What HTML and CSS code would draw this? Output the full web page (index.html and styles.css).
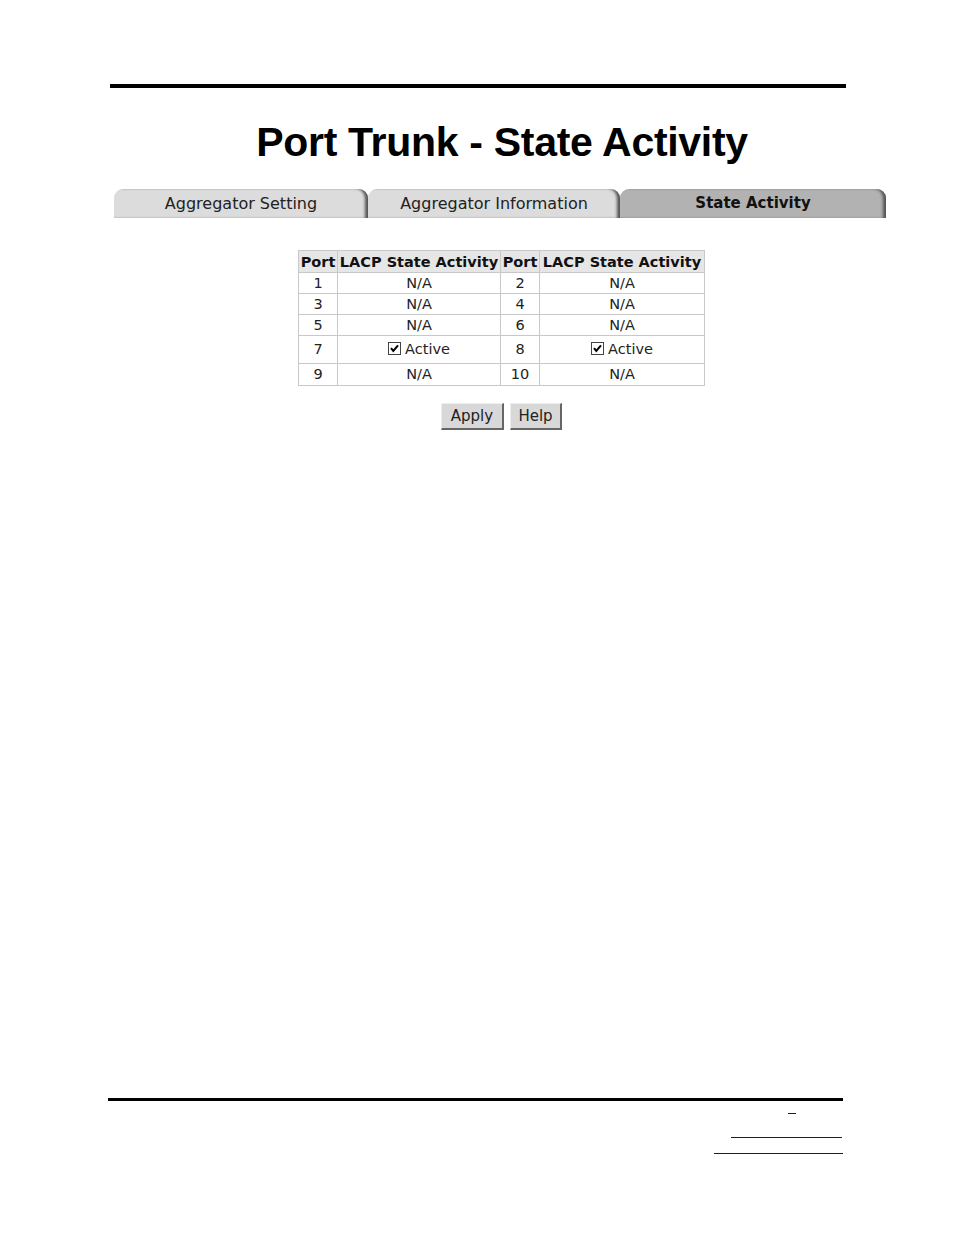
FILE: index.html
```html
<!DOCTYPE html>
<html>
<head>
<meta charset="utf-8">
<link rel="stylesheet" href="styles.css">
</head>
<body>
<div class="page">
  <div class="rule-top"></div>
  <h1 class="title">Port Trunk - State Activity</h1>
  <div class="tabs">
    <div class="tab tab1">Aggregator Setting</div>
    <div class="tab tab2">Aggregator Information</div>
    <div class="tab tab3 active">State Activity</div>
  </div>
  <div class="table-wrap">
    <table class="grid">
      <tr class="head">
        <th class="c-port">Port</th><th class="c-lacp">LACP State Activity</th>
        <th class="c-port">Port</th><th class="c-lacp2">LACP State Activity</th>
      </tr>
      <tr><td>1</td><td>N/A</td><td>2</td><td>N/A</td></tr>
      <tr><td>3</td><td>N/A</td><td>4</td><td>N/A</td></tr>
      <tr><td>5</td><td>N/A</td><td>6</td><td>N/A</td></tr>
      <tr class="tall"><td>7</td><td><span class="cb"><svg width="13" height="13" viewBox="0 0 13 13"><rect x="0.5" y="0.5" width="12" height="12" fill="#fff" stroke="#444"/><path d="M3 6.2 L5.3 9 L10 3.3" fill="none" stroke="#000" stroke-width="2"/></svg></span>Active</td><td>8</td><td><span class="cb"><svg width="13" height="13" viewBox="0 0 13 13"><rect x="0.5" y="0.5" width="12" height="12" fill="#fff" stroke="#444"/><path d="M3 6.2 L5.3 9 L10 3.3" fill="none" stroke="#000" stroke-width="2"/></svg></span>Active</td></tr>
      <tr class="last"><td>9</td><td>N/A</td><td>10</td><td>N/A</td></tr>
    </table>
  </div>
  <div class="buttons">
    <button class="btn btn-apply">Apply</button>
    <button class="btn btn-help">Help</button>
  </div>
  <div class="spacer"></div>
  <div class="rule-bottom"></div>
  <div class="foot">
    <div class="dash"></div>
    <div class="link l1"></div>
    <div class="link l2"></div>
  </div>
</div>
</body>
</html>
```
FILE: styles.css
```css
html, body {
  margin: 0;
  padding: 0;
  background: #fff;
}
.page {
  width: 954px;
  height: 1235px;
  padding-top: 84px;
  box-sizing: border-box;
  position: relative;
  overflow: hidden;
  font-family: "DejaVu Sans", Verdana, sans-serif;
}
.rule-top {
  margin-left: 110px;
  width: 736px;
  height: 4px;
  background: #000;
}
.title {
  margin: 30px 0 0 0;
  padding-left: 50px;
  text-align: center;
  font-family: "Liberation Sans", Arial, sans-serif;
  font-weight: bold;
  font-size: 41px;
  line-height: 48px;
  color: #000;
  letter-spacing: -0.3px;
}
.tabs {
  display: flex;
  margin: 23px 0 0 114px;
  width: 772px;
  height: 29px;
}
.tab {
  height: 29px;
  line-height: 29px;
  text-align: center;
  font-size: 16px;
  color: #222;
  background: #dcdcdc;
  border-top-left-radius: 9px;
  border-top-right-radius: 9px;
  box-shadow: inset -4px 0 3px -1px #555;
  box-sizing: border-box;
}
.tab1 { width: 254px; }
.tab2 { width: 252px; }
.tab3 { width: 266px; }
.tab.active {
  background: #b2b2b2;
  font-weight: bold;
  font-size: 15px;
  color: #111;
}
.table-wrap {
  margin: 32px 0 0 298px;
}
.grid {
  border-collapse: collapse;
  font-size: 14.5px;
  color: #222;
  border: 1px solid #bcbcbc;
}
.grid th, .grid td {
  border: 1px solid #c8c8c8;
  padding: 0;
  text-align: center;
  height: 20px;
  line-height: 20px;
}
.grid th {
  background: #e6e6e6;
  font-weight: bold;
  color: #111;
  height: 21px;
  white-space: nowrap;
}
.c-port { width: 38px; }
.c-lacp { width: 162px; }
.c-lacp2 { width: 164px; }
.grid tr.tall td {
  height: 27px;
  line-height: 27px;
}
.grid tr.last td {
  height: 21px;
  line-height: 21px;
}
.cb {
  display: inline-block;
  vertical-align: -1px;
  margin-right: 4px;
  height: 13px;
}
.cb svg { display: block; }
.buttons {
  display: flex;
  gap: 6px;
  margin: 17px 0 0 441px;
}
.btn {
  font-family: "DejaVu Sans", Verdana, sans-serif;
  font-size: 15px;
  color: #222;
  background: #d8d8d8;
  border: 1px solid #eee;
  border-right: 2px solid #666;
  border-bottom: 2px solid #666;
  height: 27px;
  padding: 0 6px;
  margin: 0;
}
.btn-apply { width: 63px; }
.btn-help { width: 52px; }
.spacer { height: 668px; }
.rule-bottom {
  margin-left: 108px;
  width: 735px;
  height: 3px;
  background: #000;
}
.foot {
  position: relative;
  height: 60px;
}
.dash {
  position: absolute;
  left: 788px;
  top: 12px;
  width: 8px;
  height: 1px;
  background: #222;
}
.link {
  position: absolute;
  height: 1px;
  background: #00f;
}
.l1 { left: 731px; width: 111px; top: 36px; }
.l2 { left: 714px; width: 129px; top: 52px; }
```
